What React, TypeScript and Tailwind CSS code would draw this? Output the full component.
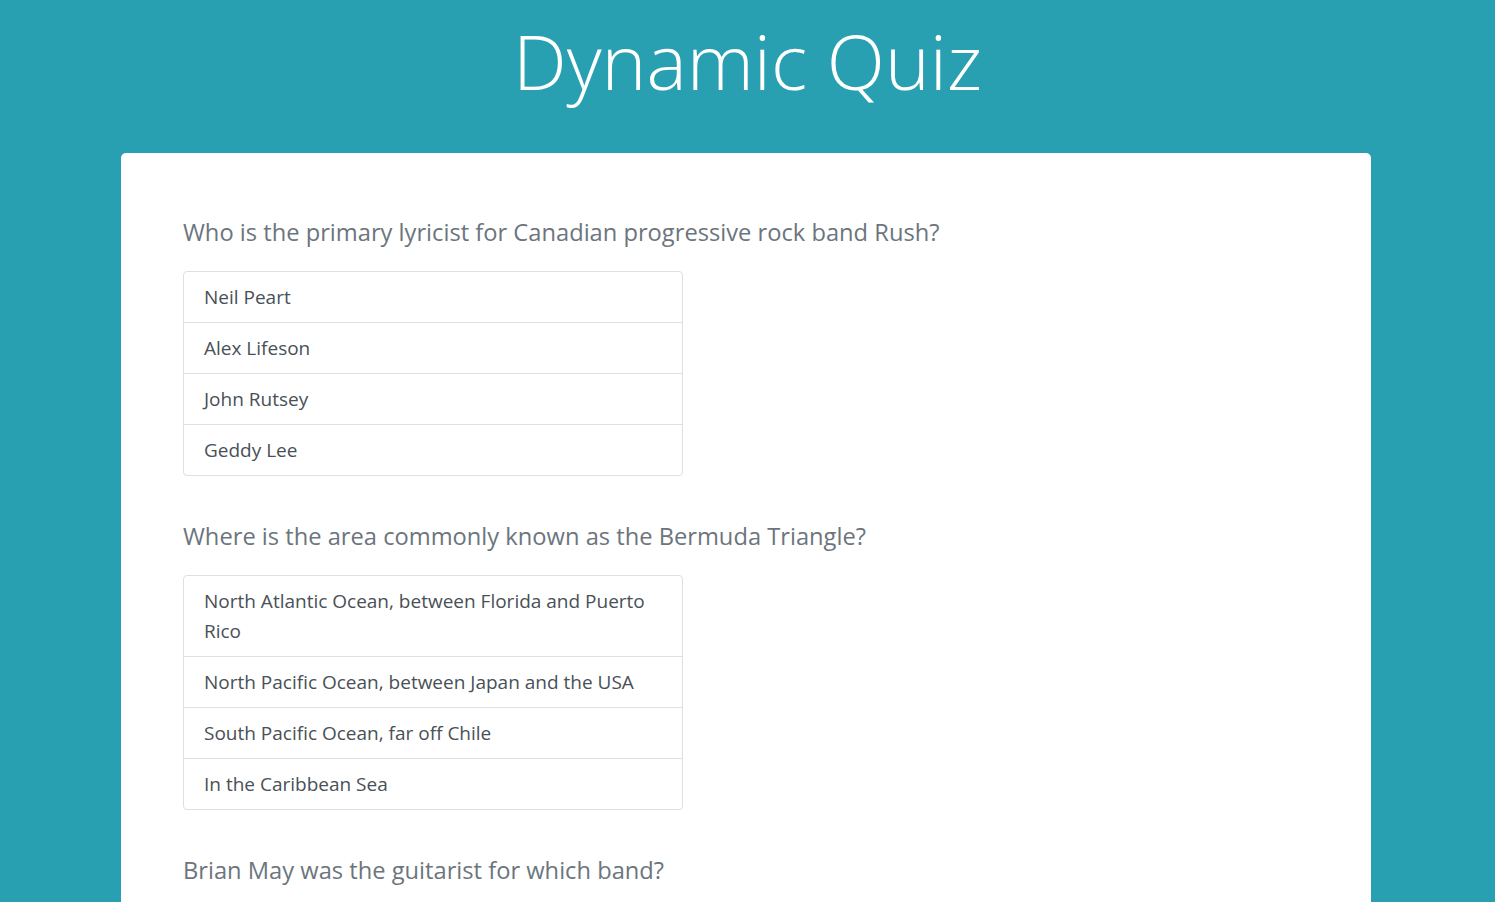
import React from "react";

const questions = [
  {
    q: "Who is the primary lyricist for Canadian progressive rock band Rush?",
    a: ["Neil Peart", "Alex Lifeson", "John Rutsey", "Geddy Lee"],
  },
  {
    q: "Where is the area commonly known as the Bermuda Triangle?",
    a: [
      "North Atlantic Ocean, between Florida and Puerto Rico",
      "North Pacific Ocean, between Japan and the USA",
      "South Pacific Ocean, far off Chile",
      "In the Caribbean Sea",
    ],
  },
  {
    q: "Brian May was the guitarist for which band?",
    a: ["Queen", "Led Zeppelin", "The Rolling Stones", "Pink Floyd"],
  },
];

export default function App() {
  return (
    <div
      className="min-h-screen bg-[#28a0b2] pb-10"
      style={{ fontFamily: '"Open Sans", "Noto Sans", Arial, sans-serif' }}
    >
      <h1 className="text-center text-white font-light text-[76px] leading-[96px] pt-[13px] pb-[44px]">
        Dynamic Quiz
      </h1>
      <div className="w-[1250px] ml-[121px] bg-white rounded-[5px] pt-[65px] px-[62px] pb-10">
        {questions.map((item, i) => (
          <div key={i} className="mb-[46px]">
            <h4 className="text-[23.7px] leading-[29px] text-[#6c757d] font-normal mb-[24px]">
              {item.q}
            </h4>
            <ul className="w-[500px] border border-[#dfdfdf] rounded-[4px]">
              {item.a.map((ans, j) => (
                <li
                  key={j}
                  className={
                    "px-[20px] py-[10px] text-[19px] leading-[30px] text-[#495057] " +
                    (j > 0 ? "border-t border-[#dfdfdf]" : "")
                  }
                >
                  {ans}
                </li>
              ))}
            </ul>
          </div>
        ))}
      </div>
    </div>
  );
}
